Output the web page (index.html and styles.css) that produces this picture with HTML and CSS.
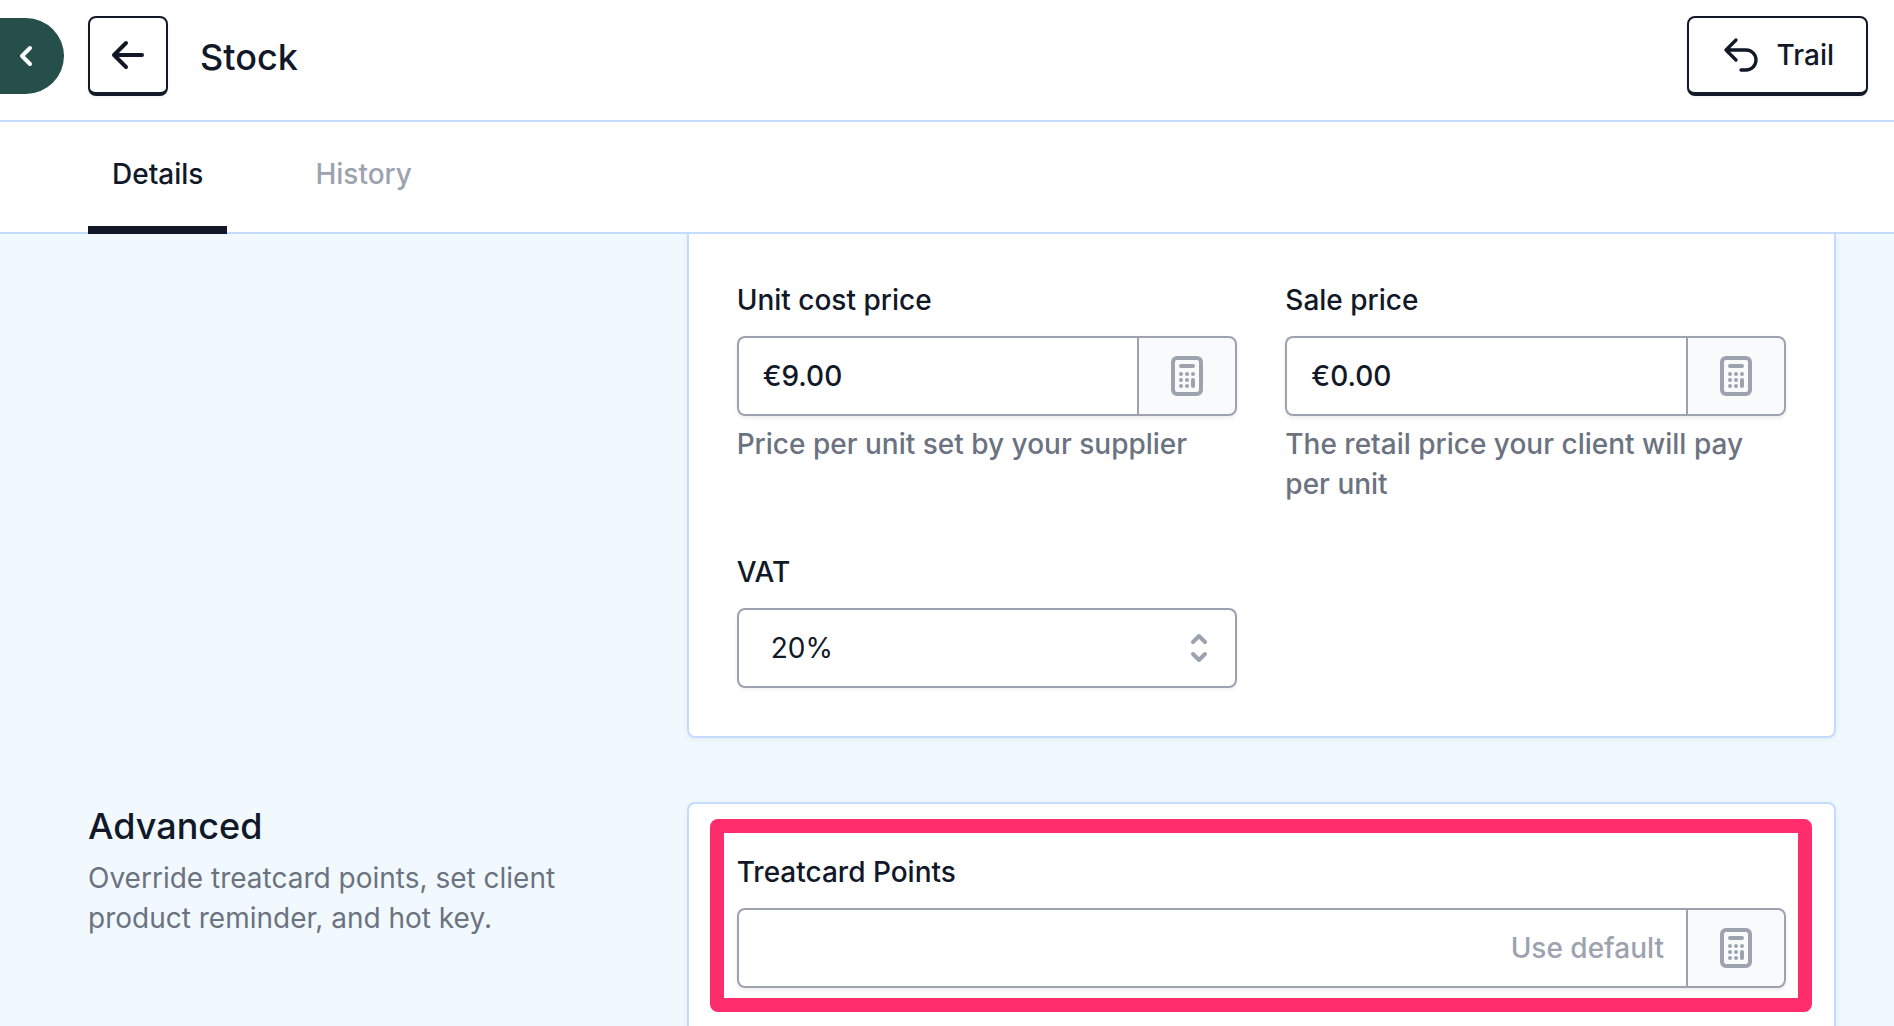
FILE: index.html
```html
<!DOCTYPE html>
<html lang="en">
<head>
  <meta charset="utf-8">
  <title>Stock</title>
  <link rel="stylesheet" href="styles.css">
</head>
<body>
  <svg class="sprite" aria-hidden="true">
    <symbol id="calculator" viewBox="0 0 32 40">
      <rect x="2" y="2" width="28" height="36" rx="4" fill="none" stroke="currentColor" stroke-width="4"/>
      <path d="M10 10h12" fill="none" stroke="currentColor" stroke-width="4" stroke-linecap="round"/>
      <path d="M10 18h0M16 18h0M22 18h0M10 24h0M16 24h0M10 30h0M16 30h0M22 24v6" fill="none" stroke="currentColor" stroke-width="4" stroke-linecap="round"/>
    </symbol>
  </svg>

  <header class="header">
    <button class="menu-toggle" type="button" aria-label="Open menu">
      <svg width="24" height="24" viewBox="0 0 24 24" fill="none" stroke="currentColor" stroke-width="4" stroke-linecap="round" stroke-linejoin="round"><path d="M16 4l-8 8 8 8"/></svg>
    </button>
    <button class="btn btn-icon" type="button" aria-label="Back">
      <svg width="40" height="40" viewBox="0 0 40 40" fill="none" stroke="currentColor" stroke-width="4" stroke-linecap="round" stroke-linejoin="round"><path d="M18 8L6 20l12 12M6 20h28"/></svg>
    </button>
    <h1 class="title">Stock</h1>
    <button class="btn btn-text" type="button">
      <svg width="40" height="40" viewBox="0 0 24 24" fill="none" stroke="currentColor" stroke-width="2" stroke-linecap="round" stroke-linejoin="round"><path d="M9 15L3 9m0 0l6-6M3 9h12a6 6 0 0 1 0 12h-3"/></svg>
      Trail
    </button>
  </header>

  <nav class="tabs">
    <a class="tab tab-active" href="#details" aria-current="page">Details</a>
    <a class="tab" href="#history">History</a>
  </nav>

  <main class="content">
    <section class="section">
      <div class="card card-continued">
        <div class="field">
          <label class="label" for="cost">Unit cost price</label>
          <div class="input-group">
            <input class="input" id="cost" type="text" value="€9.00">
            <button class="addon" type="button" aria-label="Calculate unit cost price"><svg width="32" height="40"><use href="#calculator"/></svg></button>
          </div>
          <p class="help">Price per unit set by your supplier</p>
        </div>
        <div class="field">
          <label class="label" for="sale">Sale price</label>
          <div class="input-group">
            <input class="input" id="sale" type="text" value="€0.00">
            <button class="addon" type="button" aria-label="Calculate sale price"><svg width="32" height="40"><use href="#calculator"/></svg></button>
          </div>
          <p class="help">The retail price your client will pay per unit</p>
        </div>
        <div class="field">
          <label class="label" for="vat">VAT</label>
          <div class="select-wrap">
            <select class="select" id="vat"><option>20%</option></select>
            <svg class="select-icon" width="40" height="40" viewBox="0 0 40 40" fill="none" stroke="currentColor" stroke-width="4" stroke-linecap="round" stroke-linejoin="round"><path d="M14 14l6-6 6 6M14 26l6 6 6-6"/></svg>
          </div>
        </div>
      </div>
    </section>

    <section class="section">
      <div class="intro">
        <h2 class="intro-title">Advanced</h2>
        <p class="intro-text">Override treatcard points, set client product reminder, and hot key.</p>
      </div>
      <div class="card">
        <div class="field field-wide highlighted">
          <label class="label" for="points">Treatcard Points</label>
          <div class="input-group">
            <input class="input input-right" id="points" type="text" placeholder="Use default">
            <button class="addon" type="button" aria-label="Calculate treatcard points"><svg width="32" height="40"><use href="#calculator"/></svg></button>
          </div>
        </div>
      </div>
    </section>
  </main>
</body>
</html>
```

FILE: styles.css
```css
:root {
  --ink: #111827;
  --muted: #6b7280;
  --faint: #9ca3af;
  --line: #c3dcfd;
  --page: #f1f9ff;
  --accent: #ff2d6b;
}

* {
  box-sizing: border-box;
}

body {
  display: flex;
  flex-direction: column;
  height: 100vh;
  margin: 0;
  background: #fff;
  color: var(--ink);
  font: 500 28px/40px Inter, sans-serif;
}

h1, h2, p {
  margin: 0;
}

button, input, select {
  margin: 0;
  font: inherit;
  color: inherit;
}

svg {
  display: block;
  flex: none;
}

.sprite {
  position: absolute;
  width: 0;
  height: 0;
}

/* Header */
.header {
  display: flex;
  flex: none;
  align-items: center;
  padding: 16px 26px 24px 0;
  border-bottom: 2px solid var(--line);
}

.menu-toggle {
  display: flex;
  align-items: center;
  width: 64px;
  height: 76px;
  margin-right: 24px;
  padding: 0 0 0 14px;
  border: 0;
  border-radius: 0 38px 38px 0;
  background: #264e4a;
  color: #fff;
}

.btn {
  display: flex;
  align-items: center;
  justify-content: center;
  height: 80px;
  border: 2px solid var(--ink);
  border-bottom-width: 4px;
  border-radius: 8px;
  background: #fff;
  box-shadow: 0 2px 4px rgba(0, 0, 0, 0.05);
}

.btn-icon {
  width: 80px;
  padding: 0;
}

.btn-text {
  gap: 16px;
  margin-left: auto;
  padding: 0 32px;
}

.title {
  margin-left: 32px;
  padding-top: 2px;
  font-size: 36px;
  font-weight: 500;
}

/* Tabs */
.tabs {
  display: flex;
  flex: none;
  gap: 64px;
  padding-left: 88px;
  border-bottom: 2px solid var(--line);
}

.tab {
  margin-bottom: -2px;
  padding: 32px 24px;
  border-bottom: 8px solid transparent;
  color: var(--faint);
  text-decoration: none;
}

.tab-active {
  border-color: var(--ink);
  color: var(--ink);
}

/* Content */
.content {
  flex: 1;
  min-height: 0;
  overflow-y: auto;
  scrollbar-width: none;
  padding: 0 58px 0 88px;
  background: var(--page);
}

.section {
  display: grid;
  grid-template-columns: repeat(3, minmax(0, 1fr));
  column-gap: 48px;
  margin-bottom: 64px;
}

.intro-title {
  font-size: 36px;
  font-weight: 500;
  line-height: 48px;
}

.intro-text {
  margin-top: 8px;
  color: var(--muted);
  font-weight: 400;
}

.card {
  display: grid;
  grid-column: 2 / 4;
  grid-template-columns: repeat(2, minmax(0, 1fr));
  gap: 48px;
  padding: 48px;
  border: 2px solid var(--line);
  border-radius: 8px;
  background: #fff;
  box-shadow: 0 2px 6px rgba(0, 0, 0, 0.06);
}

.card-continued {
  padding-top: 46px;
  border-top: 0;
  border-radius: 0 0 8px 8px;
}

/* Fields */
.field-wide {
  grid-column: 1 / 3;
}

.label {
  display: block;
  margin-bottom: 16px;
}

.help {
  margin-top: 8px;
  color: var(--muted);
}

.input-group {
  display: flex;
  border-radius: 8px;
  box-shadow: 0 2px 4px rgba(0, 0, 0, 0.08);
}

.input {
  flex: 1;
  min-width: 0;
  height: 80px;
  padding: 0 22px 0 24px;
  border: 2px solid var(--faint);
  border-right: 0;
  border-radius: 8px 0 0 8px;
  background: #fff;
}

.input-right {
  text-align: right;
}

.input::placeholder {
  color: var(--faint);
  opacity: 1;
}

.addon {
  padding: 0 32px;
  border: 2px solid var(--faint);
  border-radius: 0 8px 8px 0;
  background: #f9fafb;
  color: var(--faint);
}

.select-wrap {
  position: relative;
}

.select {
  display: block;
  width: 100%;
  height: 80px;
  padding: 0 72px 0 32px;
  border: 2px solid var(--faint);
  border-radius: 8px;
  appearance: none;
  background: #fff;
  box-shadow: 0 2px 4px rgba(0, 0, 0, 0.05);
  font-weight: 400;
}

.select-icon {
  position: absolute;
  top: 20px;
  right: 18px;
  color: var(--faint);
  pointer-events: none;
}

/* Callout frame around a field */
.highlighted {
  position: relative;
}

.highlighted::after {
  content: "";
  position: absolute;
  inset: -33px -26px -24px -27px;
  border: 14px solid var(--accent);
  border-radius: 8px;
  pointer-events: none;
}
```
